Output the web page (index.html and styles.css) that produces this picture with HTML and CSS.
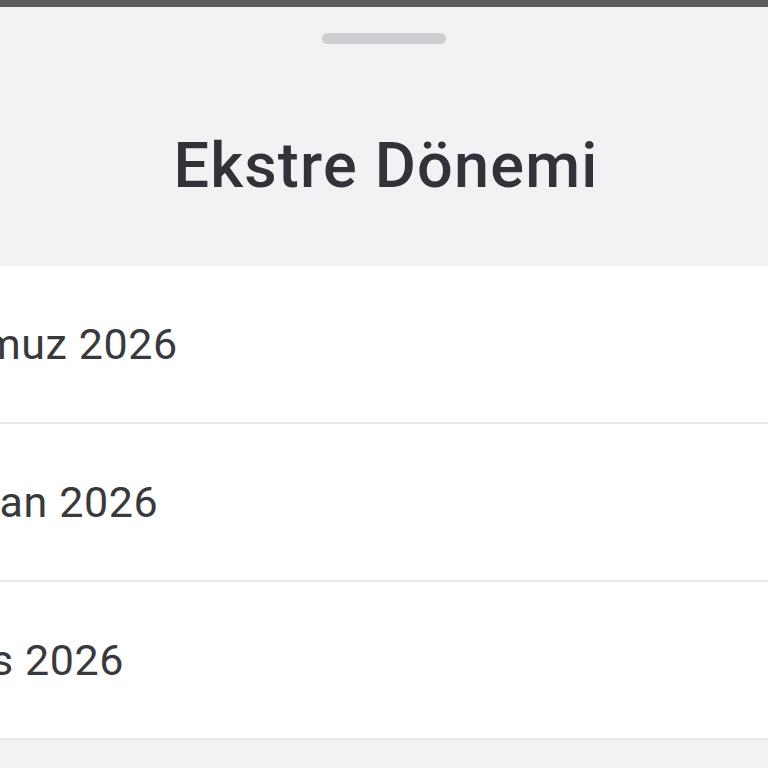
FILE: index.html
```html
<!DOCTYPE html>
<html lang="tr">
<head>
  <meta charset="UTF-8" />
  <meta name="viewport" content="width=device-width, initial-scale=1.0" />
  <title>Ekstre Dönemi</title>
  <link rel="stylesheet" href="styles.css">
</head>
<body>
  <div class="status-bar"></div>
  <div class="sheet">
    <div class="handle"></div>
    <h1 class="sheet-title">Ekstre Dönemi</h1>
    <ul class="period-list">
      <li class="period-item"><span class="period-label">Temmuz 2026</span></li>
      <li class="period-item"><span class="period-label">Haziran 2026</span></li>
      <li class="period-item"><span class="period-label">Mayıs 2026</span></li>
    </ul>
  </div>
</body>
</html>
```
FILE: styles.css
```css
body {
  margin: 0;
  padding: 0;
  font-family: Roboto, "Noto Sans", sans-serif;
  background: #f1f2f4;
  overflow: hidden;
}
.status-bar {
  height: 7px;
  background: #5b5b5b;
}
.sheet {
  background: #f1f2f4;
  padding-top: 26px;
}
.handle {
  width: 124px;
  height: 11px;
  margin: 0 auto;
  border-radius: 6px;
  background: #cdced2;
}
.sheet-title {
  margin: 0;
  height: 202px;
  padding: 20px 0 0 4px;
  display: flex;
  align-items: center;
  justify-content: center;
  font-size: 63px;
  font-weight: 500;
  color: #303438;
  letter-spacing: 1.2px;
}
.period-list {
  list-style: none;
  margin: 0;
  padding: 0;
  background: #fff;
}
.period-item {
  height: 156px;
  display: flex;
  align-items: center;
  border-bottom: 2px solid #e6e7e9;
}
.period-label {
  margin-left: -103px;
  font-size: 43px;
  color: #37393c;
  letter-spacing: 0.6px;
  white-space: nowrap;
}
```
